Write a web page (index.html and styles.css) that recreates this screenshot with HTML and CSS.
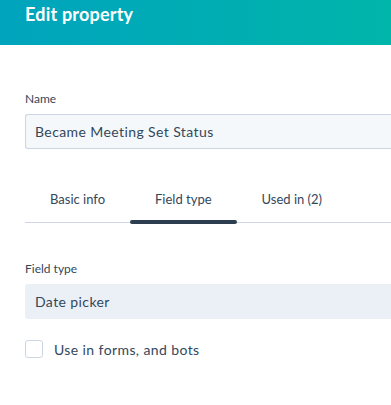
FILE: index.html
```html
<!DOCTYPE html>
<html lang="en">
<head>
    <meta charset="UTF-8">
    <meta name="viewport" content="width=device-width, initial-scale=1.0">
    <title>Edit property</title>
    <link rel="stylesheet" href="styles.css">
</head>
<body>
    <header class="topo">
        <h1>Edit property</h1>
    </header>

    <div class="painel">
        <label class="rotulo" for="nome">Name</label>
        <input class="campo" type="text" id="nome" value="Became Meeting Set Status">

        <nav class="abas">
            <span class="aba">Basic info</span>
            <span class="aba ativa">Field type</span>
            <span class="aba">Used in (2)</span>
        </nav>

        <label class="rotulo rotulo-tipo">Field type</label>
        <div class="seletor">Date picker</div>

        <label class="opcao">
            <span class="caixinha"></span>
            Use in forms, and bots
        </label>
    </div>
</body>
</html>
```

FILE: styles.css
```css
* {
    box-sizing: border-box;
    font-family: Lato, "Noto Sans", sans-serif;
}

body {
    margin: 0;
    background-color: #fff;
    color: #33475b;
    overflow: hidden;
}

.topo {
    height: 45px;
    padding: 2px 25px 0;
    background: linear-gradient(90deg, #00a4bd, #00b5aa);
}

.topo h1 {
    margin: 0;
    color: #fff;
    font-size: 18px;
    font-weight: 700;
    line-height: 24px;
    letter-spacing: 0.2px;
}

.painel {
    padding: 46px 0 0 25px;
}

.rotulo {
    display: block;
    font-size: 12px;
    line-height: 16px;
    margin-bottom: 7px;
}

/* a caixa continua alem da borda direita da janela */
.campo {
    display: block;
    width: 100%;
    height: 35px;
    padding: 0 9px;
    border: 1px solid #cbd6e2;
    border-right: none;
    border-radius: 3px 0 0 3px;
    background-color: #f5f8fa;
    color: #33475b;
    font-size: 14px;
    letter-spacing: 0.4px;
}

.abas {
    display: flex;
    margin-top: 35px;
    border-bottom: 1px solid #cbd6e2;
}

.aba {
    position: relative;
    padding: 0 25px 8px;
    font-size: 13px;
    line-height: 30px;
    height: 38px;
}

.aba.ativa::after {
    content: "";
    position: absolute;
    left: 0;
    right: 0;
    bottom: -2px;
    height: 4px;
    border-radius: 2px;
    background-color: #2d3e50;
}

.rotulo-tipo {
    margin-top: 38px;
}

.seletor {
    height: 35px;
    padding: 0 10px;
    border-radius: 3px 0 0 3px;
    background-color: #eaf0f6;
    font-size: 14px;
    line-height: 35px;
    letter-spacing: 0.4px;
}

.opcao {
    display: flex;
    align-items: center;
    gap: 11px;
    margin-top: 21px;
    font-size: 14px;
    letter-spacing: 0.4px;
}

.caixinha {
    width: 18px;
    height: 18px;
    border: 1px solid #cbd6e2;
    border-radius: 3px;
    background-color: #fff;
}
```
